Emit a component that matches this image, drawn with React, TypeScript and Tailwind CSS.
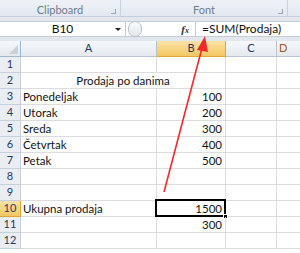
import React from 'react';

const rows: { a?: string; b?: string; merged?: string }[] = [
  {},
  { merged: 'Prodaja po danima' },
  { a: 'Ponedeljak', b: '100' },
  { a: 'Utorak', b: '200' },
  { a: 'Sreda', b: '300' },
  { a: 'Četvrtak', b: '400' },
  { a: 'Petak', b: '500' },
  {},
  {},
  { a: 'Ukupna prodaja', b: '1500' },
  { b: '300' },
  {},
];

const font = { fontFamily: 'Lato, "Open Sans", "Liberation Sans", sans-serif' };

export default function App() {
  return (
    <div className="relative w-[300px] h-[253px] overflow-hidden bg-white" style={font}>
      {/* Ribbon group labels */}
      <div className="flex h-[17px] bg-gradient-to-b from-[#eef2f7] to-[#e3e9f1] border-b border-[#c5cfdb] text-[11px] text-[#6d7b8c]">
        <div className="relative w-[121px] border-r border-[#c9d3de] text-center pt-[3px] leading-[13px]">
          Clipboard
          <span className="absolute right-[4px] top-[9px] w-[5px] h-[5px] border-r border-b border-[#9aa6b4]" />
        </div>
        <div className="relative w-[167px] border-r border-[#c9d3de] text-center pt-[3px] leading-[13px]">
          Font
          <span className="absolute right-[4px] top-[9px] w-[5px] h-[5px] border-r border-b border-[#9aa6b4]" />
        </div>
        <div className="flex-1" />
      </div>
      <div className="h-[4px] bg-[#e2e7ee]" />

      {/* Formula bar */}
      <div className="flex h-[16px] bg-white border-y border-[#c5ccd6]">
        <div className="relative w-[126px] border-r border-[#c5ccd6] flex items-center justify-center text-[12px] text-[#111]">
          B10
          <span className="absolute right-[4px] top-[6px] w-0 h-0 border-l-[3px] border-r-[3px] border-t-[3px] border-l-transparent border-r-transparent border-t-[#222]" />
        </div>
        <div className="relative w-[70px] border-r border-[#c5ccd6] bg-white">
          <div className="absolute left-[2px] top-[-1px] w-[14px] h-[16px] rounded-full border border-[#b9c1cc] bg-gradient-to-b from-[#fafbfc] to-[#e3e7ec]" />
          <span className="absolute right-[6px] top-[-1px] text-[11px] italic font-bold text-[#333]" style={{ fontFamily: '"Liberation Serif", serif' }}>
            f<span className="text-[8px]">x</span>
          </span>
        </div>
        <div className="flex-1 flex items-center pl-[6px] text-[12px] text-[#111]">=SUM(Prodaja)</div>
      </div>
      <div className="h-[4px] bg-[#e2e7ee]" />

      {/* Grid */}
      <div className="grid grid-cols-[21px_136px_69px_51px_1fr] auto-rows-[16px] text-[11.5px] text-[#111]">
        {/* header row */}
        <div className="relative border-r border-b border-[#9eb6ce] bg-gradient-to-b from-[#f6f8fb] to-[#e4e9ef]">
          <svg className="absolute right-[2px] bottom-[2px]" width="9" height="9">
            <polygon points="9,0 9,9 0,9" fill="#c9d0d8" />
          </svg>
        </div>
        <div className="border-r border-b border-[#b9c4d1] bg-gradient-to-b from-[#f6f8fb] to-[#e4e9ef] flex items-center justify-center text-[11px] text-[#27395a]">A</div>
        <div className="border-r border-b border-[#e3a533] bg-gradient-to-b from-[#fbe3a6] to-[#f3c760] flex items-center justify-center text-[11px] text-[#27395a]">B</div>
        <div className="border-r border-b border-[#b9c4d1] bg-gradient-to-b from-[#f6f8fb] to-[#e4e9ef] flex items-center justify-center text-[11px] text-[#27395a]">C</div>
        <div className="border-b border-[#b9c4d1] bg-gradient-to-b from-[#f6f8fb] to-[#e4e9ef] flex items-center pl-[2px] text-[11px] text-[#a0581c]">D</div>

        {rows.map((r, i) => {
          const n = i + 1;
          const sel = n === 10;
          return (
            <React.Fragment key={n}>
              <div
                className={
                  sel
                    ? 'border-r border-b border-[#e3a533] bg-gradient-to-b from-[#fbe3a6] to-[#f3c760] flex items-center justify-center text-[11px] text-[#27395a]'
                    : 'border-r border-b border-[#c5d1de] bg-[#eaeef3] flex items-center justify-center text-[11px] text-[#27395a]'
                }
              >
                {n}
              </div>
              {r.merged ? (
                <div className="col-span-2 border-r border-b border-[#dadcdd] flex items-center justify-center whitespace-nowrap">
                  {r.merged}
                </div>
              ) : (
                <>
                  <div className="border-r border-b border-[#dadcdd] flex items-center pl-[2px] whitespace-nowrap">{r.a}</div>
                  <div className="relative border-r border-b border-[#dadcdd] flex items-center justify-end pr-[3px]">
                    {r.b}
                    {sel && (
                      <>
                        <span className="absolute left-[-2px] top-[-2px] right-[-1px] bottom-[-1px] border-2 border-black" />
                        <span className="absolute right-[-3px] bottom-[-3px] w-[5px] h-[5px] bg-black border border-white" />
                      </>
                    )}
                  </div>
                </>
              )}
              <div className="border-r border-b border-[#dadcdd]" />
              <div className="border-b border-[#dadcdd]" />
            </React.Fragment>
          );
        })}
      </div>

      {/* Red arrow */}
      <svg className="absolute left-0 top-0 pointer-events-none" width="300" height="253">
        <line x1="164" y1="192" x2="202" y2="48" stroke="#ee2b2b" strokeWidth="1.6" />
        <polygon points="205,36 197,50 208,52" fill="#ee2b2b" />
      </svg>
    </div>
  );
}
